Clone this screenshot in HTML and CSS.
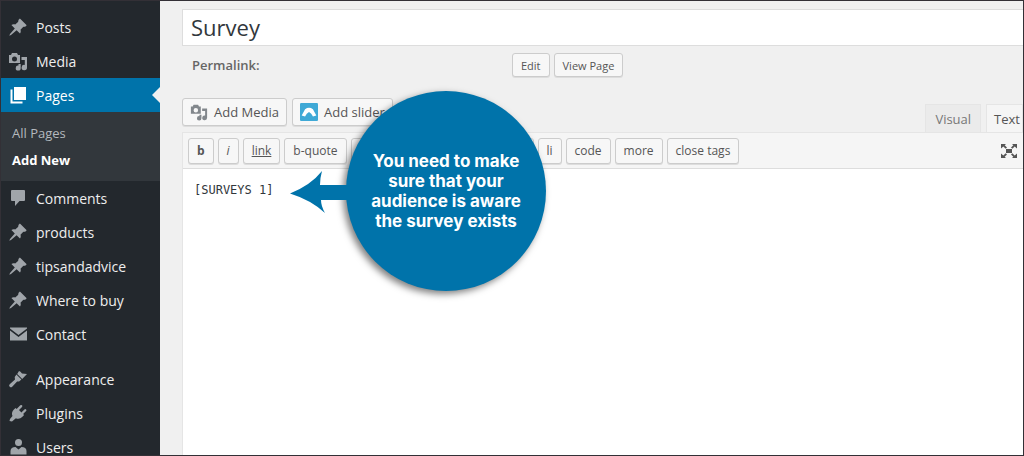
FILE: index.html
```html
<!DOCTYPE html>
<html lang="en">
<head>
<meta charset="utf-8">
<meta name="viewport" content="width=device-width, initial-scale=1">
<title>Survey</title>
<link rel="stylesheet" href="styles.css">
</head>
<body>
<svg class="defs" aria-hidden="true">
  <symbol id="pin" viewBox="0 0 20 20"><path d="M10.400 3l1.500-1.500 6.800 6.800L17.200 9.800c-.8-.3-1.500-.2-2.100.2l-2.600 2.800c.5 1.400.3 2.700-.5 3.800L8.600 13.200 3 18 1.300 18.700 2 17l4.800-5.600L3.400 8c1.100-.8 2.400-1 3.800-.5L10 5c.4-.6.6-1.300.4-2z"/></symbol>
  <symbol id="media" viewBox="0 0 20 20"><path fill-rule="evenodd" d="M1 4h2l1-2h5l1 2h2v8H1zM6.500 5.500a2.500 2.500 0 1 0 0 5 2.500 2.500 0 0 0 0-5z"/><path d="M13.500 6H19v10.500a2.700 2.700 0 1 1-2.200-2.600V9h-3.300zM10.500 13h2.200v4a2.500 2.500 0 1 1-2.200-2.400z"/></symbol>
  <symbol id="pages" viewBox="0 0 20 20"><path d="M6 2h12v13H6zM2.500 4.500h2V16.500h10v2h-12z"/></symbol>
  <symbol id="comment" viewBox="0 0 20 20"><path d="M4 2h12a1 1 0 0 1 1 1v9a1 1 0 0 1-1 1h-4.500L7 18v-5H4a1 1 0 0 1-1-1V3a1 1 0 0 1 1-1z"/></symbol>
  <symbol id="mail" viewBox="0 0 20 20"><path d="M2 3.500h17v1L10.500 11 2 4.500zM2 6.500l8.500 6.500L19 6.500v10H2z"/></symbol>
  <symbol id="brush" viewBox="0 0 20 20"><path d="M11 2l1.500.8L14 4.500l5 .6-4.800 4.800-5-5zM8.400 5.500l5 5-2.300 2.100-2-.1L4.200 17.700a1.700 1.700 0 0 1-2.500-2.500L7 10.400l-.3-2.500z"/></symbol>
  <symbol id="plug" viewBox="0 0 20 20"><path d="M12.300 2.300a1.200 1.200 0 0 1 1.700 1.700L11 7l2.400 2.400 3-3a1.200 1.200 0 0 1 1.700 1.700l-3 3 1 1-1.700 1.700c-1.900 1.900-4.300 2.500-6.500 1.400L4 18.500 1.500 18l.5-2 2.500-3C3.400 11 4 8.500 5.900 6.600L7.600 5l1 1z"/></symbol>
  <symbol id="user" viewBox="0 0 20 20"><circle cx="10.500" cy="5.500" r="3.500"/><path d="M2.500 17.500V14c0-2.500 2-4 5-4l3 2.500 3-2.500c3 0 5 1.500 5 4v3.500z"/></symbol>
</svg>

<div class="frame">
  <nav class="sidebar" aria-label="Admin menu">
    <a class="item" href="#"><svg><use href="#pin"/></svg>Posts</a>
    <a class="item" href="#"><svg><use href="#media"/></svg>Media</a>
    <a class="item current" href="#"><svg><use href="#pages"/></svg>Pages</a>
    <div class="submenu">
      <a href="#">All Pages</a>
      <a class="active" href="#">Add New</a>
    </div>
    <a class="item" href="#"><svg><use href="#comment"/></svg>Comments</a>
    <a class="item" href="#"><svg><use href="#pin"/></svg>products</a>
    <a class="item" href="#"><svg><use href="#pin"/></svg>tipsandadvice</a>
    <a class="item" href="#"><svg><use href="#pin"/></svg>Where to buy</a>
    <a class="item" href="#"><svg><use href="#mail"/></svg>Contact</a>
    <div class="separator"></div>
    <a class="item" href="#"><svg><use href="#brush"/></svg>Appearance</a>
    <a class="item" href="#"><svg><use href="#plug"/></svg>Plugins</a>
    <a class="item" href="#"><svg><use href="#user"/></svg>Users</a>
  </nav>

  <main class="main">
    <input class="title" type="text" value="Survey" aria-label="Title">
    <div class="permalink">
      <strong>Permalink:</strong>
      <button class="button" type="button">Edit</button>
      <button class="button" type="button">View Page</button>
    </div>

    <div class="editor-head">
      <button class="button media-button" type="button"><svg><use href="#media"/></svg>Add Media</button>
      <button class="button media-button" type="button"><svg viewBox="0 0 16 16"><rect width="16" height="16" rx="1" fill="#3fa9d6"/><path fill="#fff" d="M1.500 11L4.500 5.500q3.500-2.500 7 0l3 5.500-3 1-1.500-2.500L8 8 6 9.500 4.500 12z"/></svg>Add slider</button>
      <div class="tabs">
        <button class="tab" type="button">Visual</button>
        <button class="tab selected" type="button">Text</button>
      </div>
    </div>

    <div class="editor">
      <div class="toolbar">
        <button class="button" type="button"><b>b</b></button>
        <button class="button" type="button"><i>i</i></button>
        <button class="button" type="button"><u>link</u></button>
        <button class="button" type="button">b-quote</button>
        <button class="button wide" type="button" aria-label="Insert tag"></button>
        <button class="button" type="button">li</button>
        <button class="button" type="button">code</button>
        <button class="button" type="button">more</button>
        <button class="button" type="button">close tags</button>
        <button class="expand" type="button" aria-label="Fullscreen"><svg viewBox="0 0 16 14"><path d="M0 0h5L3.700 1.300 6 3.500 4.700 4.700 2.300 2.500 0 4.500zM16 0h-5l1.300 1.300L10 3.500l1.300 1.200 2.400-2.200L16 4.500zM0 14h5l-1.300-1.300L6 10.500 4.700 9.300l-2.400 2.200L0 9.500zM16 14h-5l1.300-1.300L10 10.500l1.300-1.200 2.400 2.200L16 9.500zM5 5h6v4H5z"/></svg></button>
      </div>
      <textarea class="content" aria-label="Content" spellcheck="false">[SURVEYS 1]</textarea>
    </div>
  </main>

  <aside class="callout">
    <svg class="arrow" viewBox="0 0 64 44"><path d="M0 22.500Q21 14 32 0 30 7 30 14H64V29H31Q31 35 35 42 21 29 0 22.500z"/></svg>
    <p>You need to make<br>sure that your<br>audience is aware<br>the survey exists</p>
  </aside>
</div>
</body>
</html>
```
FILE: styles.css
```css
* { box-sizing: border-box; }

body {
  margin: 0;
  font-family: "Open Sans", "Noto Sans", sans-serif;
  font-size: 13px;
  color: #555;
}

button, input, textarea { font: inherit; color: inherit; }

.defs { position: absolute; width: 0; height: 0; }

.frame {
  position: relative;
  display: flex;
  height: 100vh;
  overflow: hidden;
  border: 1px solid #333036;
  background: #f0f0f0;
}

.sidebar {
  flex: 0 0 159px;
  padding-top: 9px;
  background: #23282d;
}

.item {
  display: flex;
  align-items: center;
  gap: 8px;
  height: 34px;
  padding-left: 7px;
  color: #eee;
  font-size: 14px;
  text-decoration: none;
}

.item svg { width: 20px; height: 20px; fill: #a0a5aa; }

.item.current {
  position: relative;
  background: #0073aa;
  color: #fff;
}

.item.current svg { fill: #fff; }

.item.current::after {
  content: "";
  position: absolute;
  right: 0;
  border: 8px solid transparent;
  border-left: 0;
  border-right-color: #f0f0f0;
}

.submenu {
  display: flex;
  flex-direction: column;
  padding: 8px 0 7px 11px;
  background: #32373c;
}

.submenu a {
  color: #b4b9be;
  line-height: 27px;
  text-decoration: none;
}

.submenu .active { color: #fff; font-weight: 700; }

.separator { height: 11px; }

.main {
  flex: 1;
  display: flex;
  flex-direction: column;
  min-width: 0;
  padding: 8px 0 0 22px;
}

.title {
  width: 100%;
  height: 37px;
  padding: 0 8px 2px;
  border: 1px solid #ddd;
  border-right: 0;
  background: #fff;
  color: #32373c;
  font-size: 22px;
}

.permalink {
  display: flex;
  align-items: center;
  gap: 4px;
  padding: 7px 0 0 10px;
}

.permalink strong { flex: 0 0 316px; color: #666; font-weight: 600; }

.button {
  height: 24px;
  padding: 0 8px;
  border: 1px solid #ccc;
  border-radius: 3px;
  background: #f7f7f7;
  box-shadow: 0 1px 0 #ddd;
  font-size: 12px;
  white-space: nowrap;
}

.permalink .button { font-size: 11px; }

.editor-head {
  display: flex;
  align-items: center;
  gap: 5px;
  height: 55px;
  padding-top: 14px;
}

.media-button {
  display: flex;
  align-items: center;
  gap: 6px;
  height: 28px;
  padding: 0 7px;
  font-size: 13px;
}

.media-button svg { width: 18px; height: 18px; fill: #82878c; }

.tabs {
  display: flex;
  align-self: flex-end;
  gap: 5px;
  margin-left: auto;
}

.tab {
  height: 28px;
  padding: 0 9px;
  border: 1px solid #e5e5e5;
  border-bottom: 0;
  background: #ebebeb;
  color: #777;
}

.tab.selected {
  padding: 0 2px 0 7px;
  background: #f5f5f5;
  color: #555;
}

.editor {
  flex: 1;
  display: flex;
  flex-direction: column;
  border: 1px solid #e5e5e5;
  border-width: 1px 0 0 1px;
}

.toolbar {
  display: flex;
  align-items: center;
  gap: 4px;
  height: 36px;
  padding: 0 6px 0 5px;
  border-bottom: 1px solid #ddd;
  background: #f5f5f5;
}

.toolbar .button { height: 26px; }

.toolbar .wide { width: 183px; }

.expand {
  display: flex;
  margin-left: auto;
  padding: 0;
  border: 0;
  background: none;
}

.expand svg { width: 16px; height: 14px; fill: #555; }

.content {
  flex: 1;
  padding: 14px 11px;
  border: 0;
  resize: none;
  background: #fff;
  color: #32373c;
  font-family: "DejaVu Sans Mono", monospace;
  font-size: 12px;
}

.callout {
  position: absolute;
  left: 345px;
  top: 90px;
  display: flex;
  align-items: center;
  justify-content: center;
  width: 200px;
  height: 200px;
  border-radius: 50%;
  background: #0073aa;
  box-shadow: -3px 3px 7px rgba(0, 0, 0, 0.5);
  color: #fff;
}

.callout p {
  margin: 0;
  font-family: Inter, sans-serif;
  font-size: 17px;
  font-weight: 700;
  line-height: 20px;
  text-align: center;
  white-space: nowrap;
}

.arrow {
  position: absolute;
  left: -56px;
  top: 80px;
  width: 64px;
  height: 44px;
  fill: #0073aa;
}
```
